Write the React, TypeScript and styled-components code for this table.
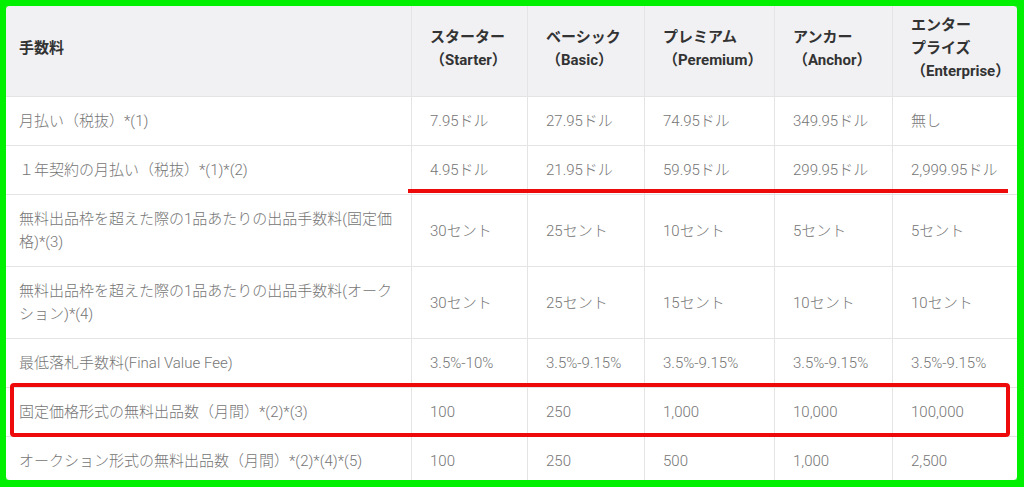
import React from "react";
import styled, { createGlobalStyle } from "styled-components";

const Global = createGlobalStyle`
  html, body { margin: 0; padding: 0; background: #ffffff; }
  body { font-family: Roboto, "Noto Sans CJK JP", sans-serif; }
`;

const Stage = styled.div`
  position: relative;
  width: 1024px;
  height: 487px;
  overflow: hidden;
  background: #ffffff;
`;

const Table = styled.table`
  width: 1024px;
  table-layout: fixed;
  border-collapse: collapse;
  font-size: 15px;
  line-height: 23px;
`;

const HeadCell = styled.th`
  background: #f1f1f3;
  color: #333333;
  font-weight: 700;
  text-align: left;
  vertical-align: middle;
  padding: 13px 18px;
  border: 1px solid #e4e4e6;
  white-space: nowrap;
`;

const Cell = styled.td`
  color: #757575;
  font-weight: 300;
  text-align: left;
  vertical-align: middle;
  padding: 13px 18px 12px;
  border: 1px solid #e4e4e4;
`;

const Frame = styled.div`
  position: absolute;
  inset: 0;
  border-style: solid;
  border-color: #00f000;
  border-width: 6px 7px 7px 6px;
  pointer-events: none;
  &::after {
    content: "";
    position: absolute;
    inset: -1px;
    border: 1px solid #00f000;
    border-radius: 4px;
  }
`;

const RedLine = styled.div`
  position: absolute;
  left: 408px;
  top: 189px;
  width: 600px;
  height: 4px;
  background: #ee0a0a;
  pointer-events: none;
`;

const RedBox = styled.div`
  position: absolute;
  left: 10px;
  top: 383px;
  width: 1000px;
  height: 54px;
  box-sizing: border-box;
  border: 4px solid #ee0a0a;
  border-radius: 4px;
  pointer-events: none;
`;

const widths = [411, 116, 117, 130, 118, 132];

const header: React.ReactNode[] = [
  "手数料",
  <>スターター<br />（Starter）</>,
  <>ベーシック<br />（Basic）</>,
  <>プレミアム<br />（Peremium）</>,
  <>アンカー<br />（Anchor）</>,
  <>エンター<br />プライズ<br />（Enterprise）</>,
];

const rows: string[][] = [
  ["月払い（税抜）*(1)", "7.95ドル", "27.95ドル", "74.95ドル", "349.95ドル", "無し"],
  ["１年契約の月払い（税抜）*(1)*(2)", "4.95ドル", "21.95ドル", "59.95ドル", "299.95ドル", "2,999.95ドル"],
  ["無料出品枠を超えた際の1品あたりの出品手数料(固定価格)*(3)", "30セント", "25セント", "10セント", "5セント", "5セント"],
  ["無料出品枠を超えた際の1品あたりの出品手数料(オークション)*(4)", "30セント", "25セント", "15セント", "10セント", "10セント"],
  ["最低落札手数料(Final Value Fee)", "3.5%-10%", "3.5%-9.15%", "3.5%-9.15%", "3.5%-9.15%", "3.5%-9.15%"],
  ["固定価格形式の無料出品数（月間）*(2)*(3)", "100", "250", "1,000", "10,000", "100,000"],
  ["オークション形式の無料出品数（月間）*(2)*(4)*(5)", "100", "250", "500", "1,000", "2,500"],
];

export default function App() {
  return (
    <Stage>
      <Global />
      <Table>
        <colgroup>
          {widths.map((w, i) => (
            <col key={i} style={{ width: w }} />
          ))}
        </colgroup>
        <thead>
          <tr>
            {header.map((h, i) => (
              <HeadCell key={i}>{h}</HeadCell>
            ))}
          </tr>
        </thead>
        <tbody>
          {rows.map((r, i) => (
            <tr key={i}>
              {r.map((c, j) => (
                <Cell key={j}>{c}</Cell>
              ))}
            </tr>
          ))}
        </tbody>
      </Table>
      <RedLine />
      <RedBox />
      <Frame />
    </Stage>
  );
}
